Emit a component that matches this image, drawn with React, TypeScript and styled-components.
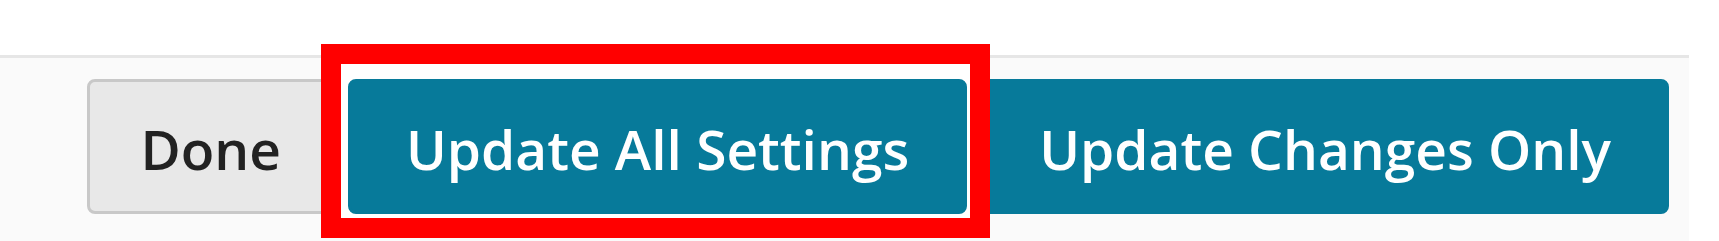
import React from "react";
import styled, { createGlobalStyle } from "styled-components";

const GlobalStyle = createGlobalStyle`
  html, body {
    margin: 0;
    padding: 0;
    background: #ffffff;
    font-family: "Open Sans", "Liberation Sans", sans-serif;
  }
  #root {
    width: 1719px;
    height: 241px;
    overflow: hidden;
  }
`;

const Page = styled.div`
  display: flex;
  flex-direction: column;
  width: 1719px;
  height: 241px;
  padding-top: 55px;
  box-sizing: border-box;
`;

const Footer = styled.div`
  flex: 1;
  width: 1689px;
  box-sizing: border-box;
  background: #fafafa;
  border-top: 3px solid #e6e6e6;
  display: flex;
  justify-content: flex-end;
  align-items: flex-start;
  gap: 14px;
  padding: 21px 20px 0 0;
`;

const Button = styled.button<{ $variant?: "default" | "primary" }>`
  height: 135px;
  box-sizing: border-box;
  padding: 4px ${(p) => (p.$variant === "primary" ? "55px" : "50px")} 0;
  border-radius: 8px;
  font-family: "Open Sans", "Liberation Sans", sans-serif;
  font-size: 55px;
  font-weight: 600;
  line-height: 1;
  display: flex;
  align-items: center;
  justify-content: center;
  cursor: pointer;
  white-space: nowrap;
  border: 3px solid ${(p) => (p.$variant === "primary" ? "#077a9a" : "#c8c8c8")};
  background: ${(p) => (p.$variant === "primary" ? "#077a9a" : "#e8e8e8")};
  color: ${(p) => (p.$variant === "primary" ? "#ffffff" : "#222222")};
`;

const Highlight = styled.div`
  position: relative;
  z-index: 1;
  display: flex;

  &::before {
    content: "";
    position: absolute;
    left: -27px;
    top: -35px;
    right: -23px;
    bottom: -24px;
    border: 20px solid #ff0000;
    background: #ffffff;
    z-index: -1;
  }
`;

export default function App() {
  return (
    <>
      <GlobalStyle />
      <Page>
        <Footer>
          <Button>Done</Button>
          <Highlight>
            <Button $variant="primary">Update All Settings</Button>
          </Highlight>
          <Button $variant="primary">Update Changes Only</Button>
        </Footer>
      </Page>
    </>
  );
}
